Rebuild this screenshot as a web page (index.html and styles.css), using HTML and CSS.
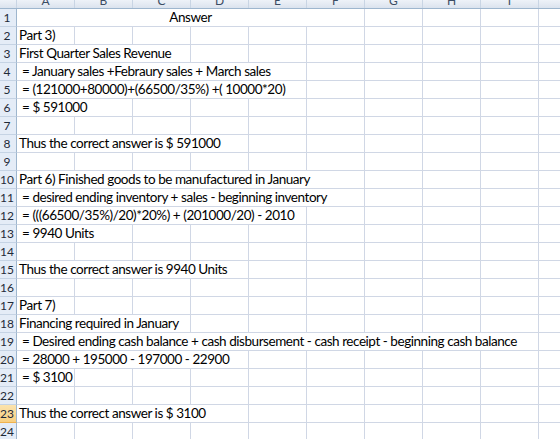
FILE: index.html
```html
<!DOCTYPE html>
<html lang="en">
<head>
  <meta charset="UTF-8">
  <meta name="viewport" content="width=device-width, initial-scale=1.0">
  <title>Answer</title>
  <link rel="stylesheet" href="styles.css">
</head>
<body>
  <div class="sheet">
    <!-- Column headers (only their lower part is in view) -->
    <div class="row head-row">
      <div class="corner"></div>
      <div class="col-head"><span>A</span></div>
      <div class="col-head"><span>B</span></div>
      <div class="col-head"><span>C</span></div>
      <div class="col-head"><span>D</span></div>
      <div class="col-head"><span>E</span></div>
      <div class="col-head"><span>F</span></div>
      <div class="col-head"><span>G</span></div>
      <div class="col-head"><span>H</span></div>
      <div class="col-head"><span>I</span></div>
      <div class="col-head"><span>J</span></div>
    </div>

    <div class="row">
      <div class="row-head">1</div>
      <div class="cell center span-6">Answer</div>
      <div class="cell"></div><div class="cell"></div><div class="cell"></div><div class="cell"></div>
    </div>
    <div class="row">
      <div class="row-head">2</div>
      <div class="cell">Part 3)</div>
      <div class="cell"></div><div class="cell"></div><div class="cell"></div><div class="cell"></div>
      <div class="cell"></div><div class="cell"></div><div class="cell"></div><div class="cell"></div><div class="cell"></div>
    </div>
    <div class="row">
      <div class="row-head">3</div>
      <div class="cell span-3">First Quarter Sales Revenue</div>
      <div class="cell"></div><div class="cell"></div><div class="cell"></div><div class="cell"></div>
      <div class="cell"></div><div class="cell"></div><div class="cell"></div>
    </div>
    <div class="row">
      <div class="row-head">4</div>
      <div class="cell span-5"> = January sales +Febraury sales + March sales</div>
      <div class="cell"></div><div class="cell"></div><div class="cell"></div><div class="cell"></div><div class="cell"></div>
    </div>
    <div class="row">
      <div class="row-head">5</div>
      <div class="cell span-5"> = (121000+80000)+(66500/35%) +( 10000*20)</div>
      <div class="cell"></div><div class="cell"></div><div class="cell"></div><div class="cell"></div><div class="cell"></div>
    </div>
    <div class="row">
      <div class="row-head">6</div>
      <div class="cell span-2"> = $ 591000</div>
      <div class="cell"></div><div class="cell"></div><div class="cell"></div><div class="cell"></div>
      <div class="cell"></div><div class="cell"></div><div class="cell"></div><div class="cell"></div>
    </div>
    <div class="row">
      <div class="row-head">7</div>
      <div class="cell"></div><div class="cell"></div><div class="cell"></div><div class="cell"></div><div class="cell"></div>
      <div class="cell"></div><div class="cell"></div><div class="cell"></div><div class="cell"></div><div class="cell"></div>
    </div>
    <div class="row">
      <div class="row-head">8</div>
      <div class="cell span-4">Thus the correct answer is $ 591000</div>
      <div class="cell"></div><div class="cell"></div><div class="cell"></div>
      <div class="cell"></div><div class="cell"></div><div class="cell"></div>
    </div>
    <div class="row">
      <div class="row-head">9</div>
      <div class="cell"></div><div class="cell"></div><div class="cell"></div><div class="cell"></div><div class="cell"></div>
      <div class="cell"></div><div class="cell"></div><div class="cell"></div><div class="cell"></div><div class="cell"></div>
    </div>
    <div class="row">
      <div class="row-head">10</div>
      <div class="cell span-6">Part 6) Finished goods to be manufactured in January</div>
      <div class="cell"></div><div class="cell"></div><div class="cell"></div><div class="cell"></div>
    </div>
    <div class="row">
      <div class="row-head">11</div>
      <div class="cell span-6"> = desired ending inventory + sales - beginning inventory</div>
      <div class="cell"></div><div class="cell"></div><div class="cell"></div><div class="cell"></div>
    </div>
    <div class="row">
      <div class="row-head">12</div>
      <div class="cell span-5"> = (((66500/35%)/20)*20%) + (201000/20) - 2010</div>
      <div class="cell"></div><div class="cell"></div><div class="cell"></div><div class="cell"></div><div class="cell"></div>
    </div>
    <div class="row">
      <div class="row-head">13</div>
      <div class="cell span-2"> = 9940 Units</div>
      <div class="cell"></div><div class="cell"></div><div class="cell"></div><div class="cell"></div>
      <div class="cell"></div><div class="cell"></div><div class="cell"></div><div class="cell"></div>
    </div>
    <div class="row">
      <div class="row-head">14</div>
      <div class="cell"></div><div class="cell"></div><div class="cell"></div><div class="cell"></div><div class="cell"></div>
      <div class="cell"></div><div class="cell"></div><div class="cell"></div><div class="cell"></div><div class="cell"></div>
    </div>
    <div class="row">
      <div class="row-head">15</div>
      <div class="cell span-4">Thus the correct answer is 9940 Units</div>
      <div class="cell"></div><div class="cell"></div><div class="cell"></div>
      <div class="cell"></div><div class="cell"></div><div class="cell"></div>
    </div>
    <div class="row">
      <div class="row-head">16</div>
      <div class="cell"></div><div class="cell"></div><div class="cell"></div><div class="cell"></div><div class="cell"></div>
      <div class="cell"></div><div class="cell"></div><div class="cell"></div><div class="cell"></div><div class="cell"></div>
    </div>
    <div class="row">
      <div class="row-head">17</div>
      <div class="cell">Part 7)</div>
      <div class="cell"></div><div class="cell"></div><div class="cell"></div><div class="cell"></div>
      <div class="cell"></div><div class="cell"></div><div class="cell"></div><div class="cell"></div><div class="cell"></div>
    </div>
    <div class="row">
      <div class="row-head">18</div>
      <div class="cell span-3">Financing required in January</div>
      <div class="cell"></div><div class="cell"></div><div class="cell"></div><div class="cell"></div>
      <div class="cell"></div><div class="cell"></div><div class="cell"></div>
    </div>
    <div class="row">
      <div class="row-head">19</div>
      <div class="cell span-9"> = Desired ending cash balance + cash disbursement - cash receipt - beginning cash balance</div>
      <div class="cell"></div>
    </div>
    <div class="row">
      <div class="row-head">20</div>
      <div class="cell span-4"> = 28000 + 195000 - 197000 - 22900</div>
      <div class="cell"></div><div class="cell"></div><div class="cell"></div>
      <div class="cell"></div><div class="cell"></div><div class="cell"></div>
    </div>
    <div class="row">
      <div class="row-head">21</div>
      <div class="cell"> = $ 3100</div>
      <div class="cell"></div><div class="cell"></div><div class="cell"></div><div class="cell"></div>
      <div class="cell"></div><div class="cell"></div><div class="cell"></div><div class="cell"></div><div class="cell"></div>
    </div>
    <div class="row">
      <div class="row-head">22</div>
      <div class="cell"></div><div class="cell"></div><div class="cell"></div><div class="cell"></div><div class="cell"></div>
      <div class="cell"></div><div class="cell"></div><div class="cell"></div><div class="cell"></div><div class="cell"></div>
    </div>
    <div class="row">
      <div class="row-head active">23</div>
      <div class="cell span-4">Thus the correct answer is $ 3100</div>
      <div class="cell"></div><div class="cell"></div><div class="cell"></div>
      <div class="cell"></div><div class="cell"></div><div class="cell"></div>
    </div>
    <div class="row">
      <div class="row-head">24</div>
      <div class="cell"></div><div class="cell"></div><div class="cell"></div><div class="cell"></div><div class="cell"></div>
      <div class="cell"></div><div class="cell"></div><div class="cell"></div><div class="cell"></div><div class="cell"></div>
    </div>
  </div>
</body>
</html>
```

FILE: styles.css
```css
* {
  margin: 0;
  padding: 0;
  box-sizing: border-box;
}

body {
  background-color: #ffffff;
  overflow: hidden;
}

.sheet {
  width: 560px;
  height: 439px;
  overflow: hidden;
  display: flex;
  flex-direction: column;
  font-family: Lato, "Open Sans", sans-serif;
  font-size: 13.5px;
  letter-spacing: -0.45px;
  color: #000000;
}

.row {
  display: grid;
  grid-template-columns: 17px repeat(10, 58px);
  height: 18px;
  flex-shrink: 0;
}

/* column header strip */
.head-row {
  height: 9px;
  background: linear-gradient(#eef2f8, #dbe3ee);
  border-bottom: 1px solid #9eb6ce;
}

.corner {
  border-right: 1px solid #c9d5e4;
}

.col-head {
  border-right: 1px solid #c9d5e4;
  overflow: hidden;
  display: flex;
  justify-content: center;
  align-items: flex-end;
  font-size: 12px;
  line-height: 12px;
  letter-spacing: 0;
  color: #3b4c63;
}

.col-head span {
  margin-bottom: 1px;
}

/* row numbers */
.row-head {
  background-color: #e4ecf7;
  border-right: 1px solid #9eb6ce;
  border-bottom: 1px solid #c5d3e4;
  font-size: 12px;
  line-height: 17px;
  letter-spacing: 0;
  text-align: center;
  padding-right: 2px;
  color: #1f2a38;
  overflow: hidden;
  white-space: nowrap;
}

.row-head.active {
  background: linear-gradient(#fbe3ae, #f8cf7f);
  border-bottom-color: #f0b24e;
}

/* cells */
.cell {
  border-right: 1px solid #d0d7e5;
  border-bottom: 1px solid #d0d7e5;
  padding: 0 2px;
  white-space: pre;
  line-height: 17px;
  display: flex;
  align-items: flex-end;
  overflow: visible;
}

.cell.center {
  justify-content: center;
}

.span-2 { grid-column: span 2; }
.span-3 { grid-column: span 3; }
.span-4 { grid-column: span 4; }
.span-5 { grid-column: span 5; }
.span-6 { grid-column: span 6; }
.span-9 { grid-column: span 9; }
```
